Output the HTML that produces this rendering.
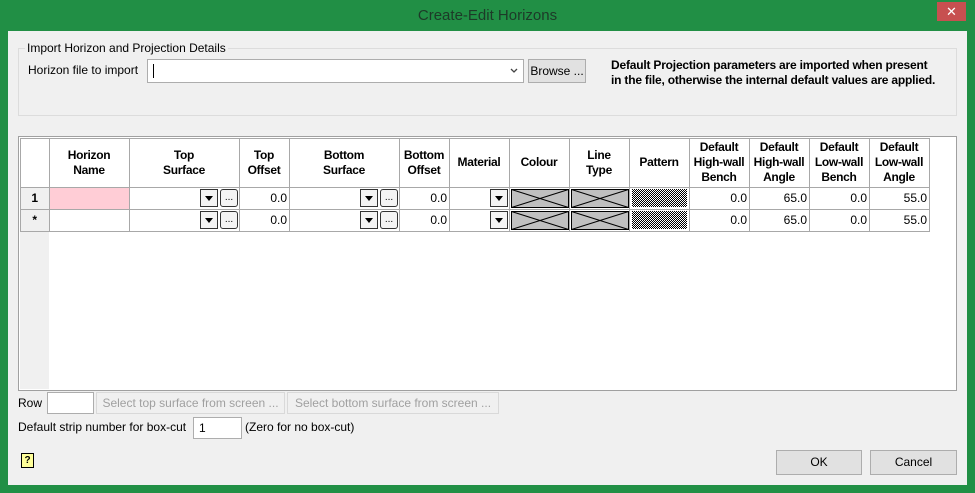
<!DOCTYPE html>
<html><head><meta charset="utf-8"><style>
*{box-sizing:border-box;margin:0;padding:0}
body{width:975px;height:493px;background:#218f45;position:relative;overflow:hidden;font-family:"Liberation Sans",sans-serif;font-size:12px;color:#000}
.abs{position:absolute}
#title{left:0;top:0;width:975px;height:31px;text-align:center;line-height:31px;font-size:15px;color:#1d3a28}
#close{left:937px;top:2px;width:29px;height:19px;background:#c75050;color:#fff;text-align:center;line-height:19px;font-size:13px}
#client{left:8px;top:31px;width:959px;height:454px;background:#f0f0f0}
.t{position:absolute;font-weight:bold;font-size:12px;text-align:center;display:flex;align-items:center;justify-content:center;line-height:15px;letter-spacing:-0.3px;height:49px;top:138px}
.n{position:absolute;text-align:right;line-height:22px;font-size:12px;height:22px}
.vl{position:absolute;width:1px;background:#a8a8a8}
.hl{position:absolute;height:1px;background:#a8a8a8}
.dd{position:absolute;width:18px;height:18px;border:1px solid #333;background:#f4f4f4}
.dd:after{content:"";position:absolute;left:4px;top:6px;border-left:4px solid transparent;border-right:4px solid transparent;border-top:5px solid #000}
.el{position:absolute;width:18px;height:18px;border:1px solid #333;border-radius:3px;background:#f4f4f4;font-size:10px;text-align:center;line-height:16px}
.btn{position:absolute;background:#e1e1e1;border:1px solid #adadad;text-align:center}
</style></head><body>
<div class="abs" id="title">Create-Edit Horizons</div>
<div class="abs" id="close">✕</div>
<div class="abs" id="client"></div>

<div class="abs" style="left:18px;top:48px;width:939px;height:68px;border:1px solid #dcdcdc"></div>
<div class="abs" style="left:25px;top:41px;background:#f0f0f0;padding:0 2px;font-size:12px">Import Horizon and Projection Details</div>
<div class="abs" style="left:28px;top:63px">Horizon file to import</div>
<div class="abs" style="left:147px;top:59px;width:377px;height:24px;background:#fff;border:1px solid #adadad"><div class="abs" style="left:5px;top:4px;width:1px;height:14px;background:#000"></div><svg class="abs" style="right:5px;top:8px" width="8" height="6"><path d="M1 1L4 4L7 1" stroke="#444" fill="none" stroke-width="1.3"/></svg></div>
<div class="abs btn" style="left:528px;top:59px;width:58px;height:24px;line-height:22px">Browse ...</div>
<div class="abs" style="left:611px;top:58px;font-weight:bold;line-height:15px;font-size:12px;letter-spacing:-0.2px">Default Projection parameters are imported when present<br>in the file, otherwise the internal default values are applied.</div>

<!-- grid -->
<div class="abs" style="left:18px;top:136px;width:939px;height:255px;background:#fff;border:1px solid #a0a0a0"></div>
<div class="abs" style="left:20px;top:187px;width:29px;height:202px;background:#f0f0f0"></div>
<div class="abs" style="left:49px;top:187px;width:81px;height:22px;background:#ffcdd6"></div>

<div class="hl" style="left:20px;top:138px;width:910px"></div>
<div class="hl" style="left:20px;top:187px;width:910px"></div>
<div class="hl" style="left:20px;top:209px;width:910px"></div>
<div class="hl" style="left:20px;top:231px;width:910px"></div>
<div class="vl" style="left:20px;top:138px;height:93px"></div>
<div class="vl" style="left:49px;top:138px;height:93px"></div>
<div class="vl" style="left:129px;top:138px;height:93px"></div>
<div class="vl" style="left:239px;top:138px;height:93px"></div>
<div class="vl" style="left:289px;top:138px;height:93px"></div>
<div class="vl" style="left:399px;top:138px;height:93px"></div>
<div class="vl" style="left:449px;top:138px;height:93px"></div>
<div class="vl" style="left:509px;top:138px;height:93px"></div>
<div class="vl" style="left:569px;top:138px;height:93px"></div>
<div class="vl" style="left:629px;top:138px;height:93px"></div>
<div class="vl" style="left:689px;top:138px;height:93px"></div>
<div class="vl" style="left:749px;top:138px;height:93px"></div>
<div class="vl" style="left:809px;top:138px;height:93px"></div>
<div class="vl" style="left:869px;top:138px;height:93px"></div>
<div class="vl" style="left:929px;top:138px;height:93px"></div>

<div class="t" style="left:49px;width:80px">Horizon<br>Name</div>
<div class="t" style="left:129px;width:110px">Top<br>Surface</div>
<div class="t" style="left:239px;width:50px">Top<br>Offset</div>
<div class="t" style="left:289px;width:110px">Bottom<br>Surface</div>
<div class="t" style="left:399px;width:50px">Bottom<br>Offset</div>
<div class="t" style="left:449px;width:60px">Material</div>
<div class="t" style="left:509px;width:60px">Colour</div>
<div class="t" style="left:569px;width:60px">Line<br>Type</div>
<div class="t" style="left:629px;width:60px">Pattern</div>
<div class="t" style="left:689px;width:60px">Default<br>High-wall<br>Bench</div>
<div class="t" style="left:749px;width:60px">Default<br>High-wall<br>Angle</div>
<div class="t" style="left:809px;width:60px">Default<br>Low-wall<br>Bench</div>
<div class="t" style="left:869px;width:60px">Default<br>Low-wall<br>Angle</div>

<svg width="0" height="0" style="position:absolute"><defs>
<pattern id="chk" width="2" height="2" patternUnits="userSpaceOnUse"><rect width="2" height="2" fill="#fff"/><rect width="1" height="1" fill="#000"/><rect x="1" y="1" width="1" height="1" fill="#000"/></pattern>
</defs></svg>

<div class="t" style="left:20px;width:29px;top:187px;height:22px">1</div>
<div class="t" style="left:20px;width:29px;top:209px;height:22px">*</div>

<div class="n" style="left:239px;top:187px;width:48px">0.0</div>
<div class="n" style="left:239px;top:209px;width:48px">0.0</div>
<div class="n" style="left:399px;top:187px;width:48px">0.0</div>
<div class="n" style="left:399px;top:209px;width:48px">0.0</div>
<div class="n" style="left:689px;top:187px;width:58px">0.0</div>
<div class="n" style="left:689px;top:209px;width:58px">0.0</div>
<div class="n" style="left:749px;top:187px;width:58px">65.0</div>
<div class="n" style="left:749px;top:209px;width:58px">65.0</div>
<div class="n" style="left:809px;top:187px;width:58px">0.0</div>
<div class="n" style="left:809px;top:209px;width:58px">0.0</div>
<div class="n" style="left:869px;top:187px;width:58px">55.0</div>
<div class="n" style="left:869px;top:209px;width:58px">55.0</div>

<div class="dd" style="left:200px;top:189px"></div><div class="el" style="left:220px;top:189px">...</div>
<div class="dd" style="left:200px;top:211px"></div><div class="el" style="left:220px;top:211px">...</div>
<div class="dd" style="left:360px;top:189px"></div><div class="el" style="left:380px;top:189px">...</div>
<div class="dd" style="left:360px;top:211px"></div><div class="el" style="left:380px;top:211px">...</div>
<div class="dd" style="left:490px;top:189px"></div>
<div class="dd" style="left:490px;top:211px"></div>

<svg class="abs" style="left:511px;top:189px" width="58" height="19"><rect x="0.5" y="0.5" width="57" height="18" fill="#c0c0c0" stroke="#000"/><path d="M0.5 0.5L57.5 18.5M57.5 0.5L0.5 18.5" stroke="#000"/></svg>
<svg class="abs" style="left:511px;top:211px" width="58" height="19"><rect x="0.5" y="0.5" width="57" height="18" fill="#c0c0c0" stroke="#000"/><path d="M0.5 0.5L57.5 18.5M57.5 0.5L0.5 18.5" stroke="#000"/></svg>
<svg class="abs" style="left:571px;top:189px" width="58" height="19"><rect x="0.5" y="0.5" width="57" height="18" fill="#c0c0c0" stroke="#000"/><path d="M0.5 0.5L57.5 18.5M57.5 0.5L0.5 18.5" stroke="#000"/></svg>
<svg class="abs" style="left:571px;top:211px" width="58" height="19"><rect x="0.5" y="0.5" width="57" height="18" fill="#c0c0c0" stroke="#000"/><path d="M0.5 0.5L57.5 18.5M57.5 0.5L0.5 18.5" stroke="#000"/></svg>
<svg class="abs" style="left:632px;top:189px" width="55" height="18"><rect width="55" height="18" fill="url(#chk)"/></svg>
<svg class="abs" style="left:632px;top:211px" width="55" height="18"><rect width="55" height="18" fill="url(#chk)"/></svg>

<!-- bottom -->
<div class="abs" style="left:18px;top:396px">Row</div>
<div class="abs" style="left:47px;top:392px;width:47px;height:22px;background:#fff;border:1px solid #adadad"></div>
<div class="abs btn" style="left:96px;top:392px;width:189px;height:22px;line-height:20px;color:#a0a0a0;background:#f0f0f0;border-color:#d9d9d9">Select top surface from screen ...</div>
<div class="abs btn" style="left:287px;top:392px;width:212px;height:22px;line-height:20px;color:#a0a0a0;background:#f0f0f0;border-color:#d9d9d9">Select bottom surface from screen ...</div>
<div class="abs" style="left:18px;top:420px">Default strip number for box-cut</div>
<div class="abs" style="left:193px;top:417px;width:49px;height:22px;background:#fff;border:1px solid #adadad;padding-left:5px;line-height:20px">1</div>
<div class="abs" style="left:245px;top:420px">(Zero for no box-cut)</div>
<div class="abs" style="left:21px;top:453px;width:13px;height:15px;background:#ffff9a;border:1px solid #000;font-size:10px;font-weight:bold;text-align:center;line-height:13px">?</div>
<div class="abs btn" style="left:776px;top:450px;width:86px;height:25px;line-height:23px">OK</div>
<div class="abs btn" style="left:870px;top:450px;width:87px;height:25px;line-height:23px">Cancel</div>
</body></html>
